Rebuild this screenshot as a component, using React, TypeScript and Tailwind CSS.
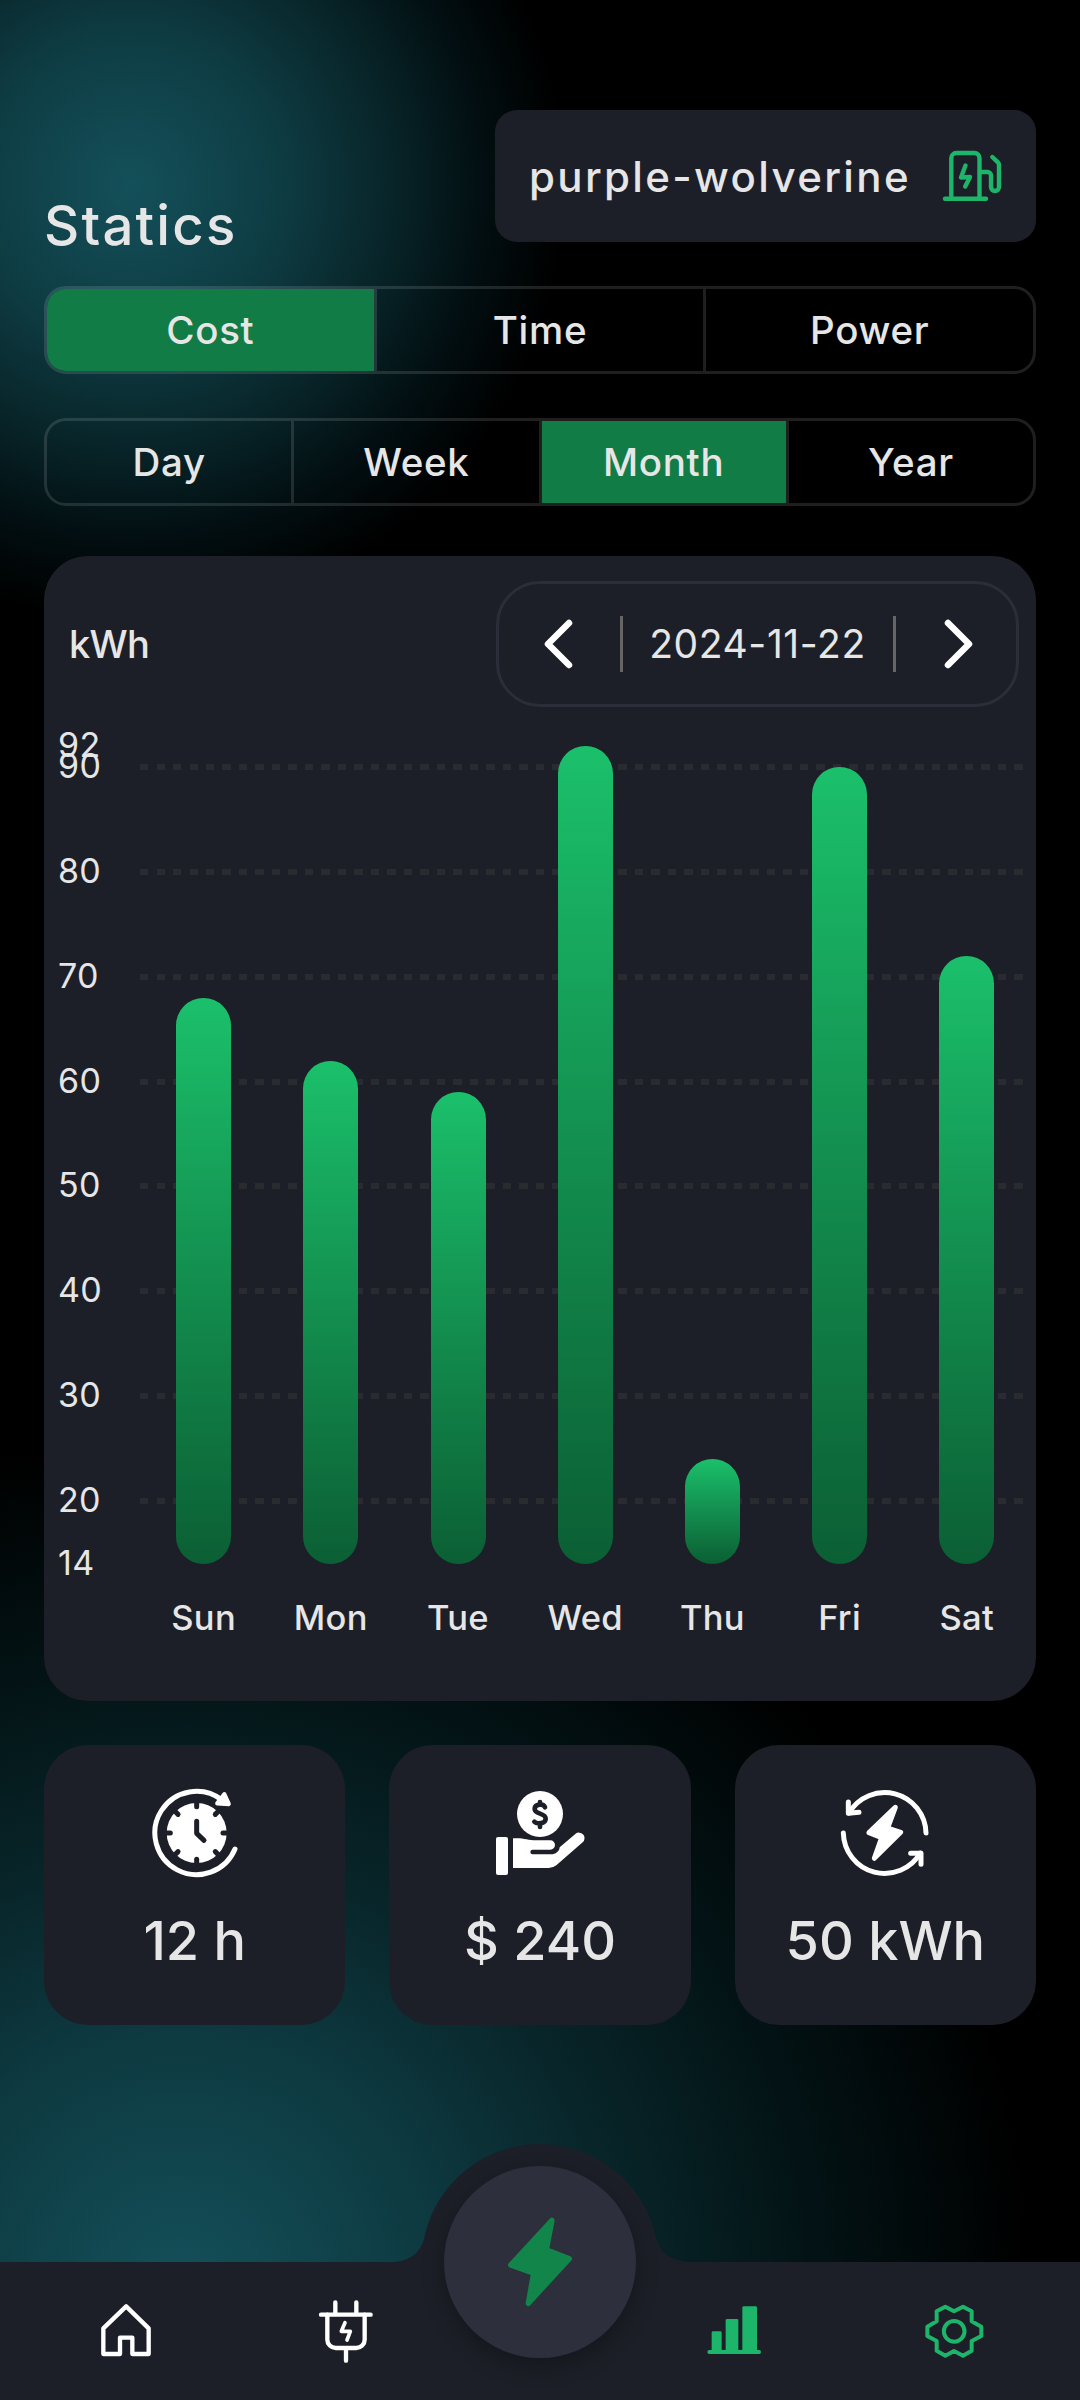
import type { ReactNode } from "react";

const GREEN = "#1db569";

const readings = [
  { day: "Sun", value: 68 },
  { day: "Mon", value: 62 },
  { day: "Tue", value: 59 },
  { day: "Wed", value: 92 },
  { day: "Thu", value: 24 },
  { day: "Fri", value: 90 },
  { day: "Sat", value: 72 },
];

const MIN = 14;
const MAX = 92;
const ticks = [92, 90, 80, 70, 60, 50, 40, 30, 20, 14];

// Distance from the top of the plot, in percent
const fromTop = (value: number) => ((MAX - value) / (MAX - MIN)) * 100;

function ChargerIcon() {
  return (
    <svg width="66" height="66" viewBox="0 0 66 66" fill="none" stroke={GREEN} strokeWidth="4.4" strokeLinecap="round" strokeLinejoin="round">
      <path d="M12.3 55V15a5 5 0 0 1 5-5h18.2a5 5 0 0 1 5 5v40" />
      <path d="M6 55.7h41" />
      <path d="M26.5 22.5 22 34.5l9-.5-4.8 9.5" />
      <path d="M41 29h7.5a3.5 3.5 0 0 1 3.5 3.5V44a4 4 0 0 0 8 0V22c0-1-.3-1.700-.8-2.300L53.300 14" />
    </svg>
  );
}

function ClockIcon() {
  return (
    <svg width="96" height="96" viewBox="0 0 288 288" fill="none" strokeLinecap="round" strokeLinejoin="round">
      <path d="M225 45A125 125 0 1 0 264 192" stroke="#fff" strokeWidth="15" />
      <path d="M232 28 245 57 211 55Z" fill="#fff" stroke="#fff" strokeWidth="13" />
      <circle cx="149" cy="144" r="90" fill="#fff" />
      <g stroke="#1d1f28" strokeWidth="15">
        {[0, 45, 90, 135, 180, 225, 270, 315].map((deg) => (
          <path key={deg} d="M149 50v15" transform={`rotate(${deg} 149 144)`} />
        ))}
        <path d="M149 109v36l22 21" />
      </g>
    </svg>
  );
}

function MoneyIcon() {
  return (
    <svg width="96" height="96" viewBox="0 0 288 288" fill="#fff">
      <circle cx="144" cy="87" r="69" />
      <path
        d="M144 51v8M144 118v8M159 67c-4-12-31-11-31 5 0 17 33 11 33 29 0 17-28 16-34 9"
        fill="none"
        stroke="#1d1f28"
        strokeWidth="14"
        strokeLinecap="round"
        strokeLinejoin="round"
      />
      <rect x="12" y="156" width="36" height="114" rx="6" />
      <path d="M63 160c29-3 45 6 69 6h43a14 14 0 0 1 0 28h-53a7 7 0 0 0 0 14h55c14 0 25-8 26-21l47-40a16 16 0 0 1 22 25l-79 69q-10 8-23 8H63Z" />
    </svg>
  );
}

function EnergyIcon() {
  return (
    <svg width="96" height="96" viewBox="0 0 288 288" fill="none" stroke="#fff" strokeWidth="15" strokeLinecap="round" strokeLinejoin="round">
      <path d="M267 144A124 124 0 0 0 36 84" />
      <path d="M34 51v34l32-3" />
      <path d="M19 144A124 124 0 0 0 250 204" />
      <path d="M221 205h31v33" />
      <path d="M175 67 152 129 191 142 112 220 134 158 96 143Z" fill="#fff" />
    </svg>
  );
}

function HomeIcon() {
  return (
    <svg width="66" height="66" viewBox="0 0 198 198" fill="none" stroke="#fff" strokeWidth="13" strokeLinejoin="round">
      <path d="M31 168V91L99.500 25 167 91v77h-49v-49H81v49Z" />
    </svg>
  );
}

function PlugIcon() {
  return (
    <svg width="66" height="66" viewBox="0 0 198 198" fill="none" stroke="#fff" strokeWidth="13" strokeLinecap="round" strokeLinejoin="round">
      <path d="M67 13v34M130 13v34M24 50h149M99 154v34" />
      <path d="M43 50v75a25 25 0 0 0 25 25h62a25 25 0 0 0 25-25V50" />
      <path d="M96 74 85 100h27l-10 26" strokeWidth="11" />
    </svg>
  );
}

function StatsIcon() {
  return (
    <svg width="66" height="66" viewBox="0 0 198 198" fill={GREEN}>
      <rect x="32" y="100" width="30" height="64" rx="4" />
      <rect x="74" y="63" width="38" height="100" rx="4" />
      <rect x="124" y="25" width="44" height="138" rx="4" />
      <rect x="19" y="156" width="161" height="12" rx="6" />
    </svg>
  );
}

function SettingsIcon() {
  return (
    <svg width="66" height="66" viewBox="0 0 198 198" fill="none" stroke={GREEN} strokeWidth="12" strokeLinejoin="round">
      <path d="M73 26 99 40 126 26 152 40V70L181 86V114L152 129V158L126 173 99 159 73 173 47 158V129L19 114V86L47 70V40Z" />
      <circle cx="99.500" cy="100" r="31" />
    </svg>
  );
}

function Segmented({ items, active }: { items: string[]; active: string }) {
  return (
    <div className="flex h-[88px] overflow-hidden rounded-[22px] border-3 border-white/12 bg-clip-padding">
      {items.map((item, i) => (
        <div
          key={item}
          className={`flex flex-1 items-center justify-center pt-0.5 text-[38.5px] font-medium tracking-[0.7px] ${
            i > 0 ? "border-l-3 border-white/12 bg-clip-padding" : ""
          } ${item === active ? "bg-[#127c46]" : ""}`}
        >
          {item}
        </div>
      ))}
    </div>
  );
}

function DatePicker() {
  return (
    <div className="flex h-[126px] w-[523px] items-center justify-between rounded-[44px] border-3 border-[#2b2d39] px-[42px]">
      <svg width="32" height="54" viewBox="0 0 32 54" fill="none" stroke="#fff" strokeWidth="6.500" strokeLinecap="round" strokeLinejoin="round">
        <path d="M28 6 7 27l21 21" />
      </svg>
      <div className="flex items-center gap-[28px]">
        <div className="h-14 w-[3px] bg-[#666666]" />
        <span className="flex w-[214px] justify-center text-[39px] tracking-[0.6px] whitespace-nowrap">
          2024-11-22
        </span>
        <div className="h-14 w-[3px] bg-[#666666]" />
      </div>
      <svg width="32" height="54" viewBox="0 0 32 54" fill="none" stroke="#fff" strokeWidth="6.500" strokeLinecap="round" strokeLinejoin="round">
        <path d="M6 6l21 21L6 48" />
      </svg>
    </div>
  );
}

function Chart() {
  return (
    <div className="mt-[39px] flex">
      <div className="relative h-[818px] w-[96px]">
        {ticks.map((tick) => (
          <span
            key={tick}
            className="absolute left-[14px] -mt-px -translate-y-1/2 text-[34px] leading-none tracking-[0.3px]"
            style={{ top: `${fromTop(tick)}%` }}
          >
            {tick}
          </span>
        ))}
      </div>
      <div className="w-[883px]">
        <div className="relative h-[818px]">
          {ticks.slice(1, -1).map((tick) => (
            <div
              key={tick}
              className="absolute inset-x-0 h-[6px] -translate-y-1/2 bg-[repeating-linear-gradient(90deg,#292b31_0_8.25px,transparent_8.25px_16.5px)]"
              style={{ top: `${fromTop(tick)}%` }}
            />
          ))}
          <div className="relative flex h-full items-end justify-between pr-[28.5px] pl-[36.3px]">
            {readings.map(({ day, value }) => (
              <div
                key={day}
                className="w-[55px] rounded-full bg-linear-to-b from-[#1bc06b] to-[#0b5f34]"
                style={{ height: `${100 - fromTop(value)}%` }}
              />
            ))}
          </div>
        </div>
        <div className="mt-[28px] flex text-[34.5px] font-medium">
          {readings.map(({ day }) => (
            <span key={day} className="w-[127.2px] shrink-0 text-center tracking-[0.3px]">
              {day}
            </span>
          ))}
        </div>
      </div>
    </div>
  );
}

function StatCard({ icon, label }: { icon: ReactNode; label: string }) {
  return (
    <div className="flex h-[280px] flex-1 flex-col items-center rounded-[44px] bg-[#1d1f28] pt-[40px]">
      {icon}
      <span className="mt-[25px] text-[54px] leading-[70px] font-medium whitespace-nowrap">{label}</span>
    </div>
  );
}

function BottomNav() {
  return (
    <nav className="relative mt-auto flex h-[138px] items-center justify-between bg-[#1d1f28] pr-[16.5px] pl-4">
      {/* Raised hump behind the charge button */}
      <svg className="absolute -top-[118px] left-[380px]" width="320" height="120" viewBox="0 0 320 120" fill="#1d1f28">
        <path d="M0 118.500H8C28 118.500 42 110 45 90A118.500 118.500 0 0 1 275 90C278 108 290 118.500 318 118.500V120H0Z" />
      </svg>
      <div className="absolute -top-24 left-[444px] flex size-48 items-center justify-center rounded-full bg-[#2d303c] shadow-[0_8px_22px_rgba(0,0,0,0.3)]">
        <svg width="96" height="96" viewBox="0 0 288 288" fill="#12854a" stroke="#12854a" strokeWidth="16" strokeLinejoin="round">
          <path d="M180 19 163 107 232 134 109 268 125 178 56 153Z" />
        </svg>
      </div>
      <div className="flex">
        <div className="flex w-[220px] justify-center"><HomeIcon /></div>
        <div className="flex w-[220px] justify-center"><PlugIcon /></div>
      </div>
      <div className="flex">
        <div className="flex w-[220px] justify-center"><StatsIcon /></div>
        <div className="flex w-[220px] justify-center"><SettingsIcon /></div>
      </div>
    </nav>
  );
}

export default function App() {
  return (
    <div className="flex h-[2400px] w-[1080px] flex-col overflow-hidden bg-black bg-[radial-gradient(circle_at_130px_185px,#14505a_0,#0e3c43_150px,#082529_260px,#020e11_355px,transparent_435px),radial-gradient(circle_at_180px_2290px,#14505a_0,#0d383f_270px,#082529_440px,#031315_630px,transparent_850px)] font-[Inter,sans-serif] text-[#e6e6e6]">
      <div className="flex flex-col px-11 pt-[110px]">
        <header className="flex h-[132px] items-end justify-between">
          <h1 className="-mb-[18px] text-[54.5px] leading-[70px] font-medium tracking-[2.2px]">Statics</h1>
          <div className="flex h-[132px] w-[541px] items-center justify-between rounded-[22px] bg-[#1d1f28] pr-[31px] pl-[34px]">
            <span className="text-[42px] font-medium tracking-[2.35px]">purple-wolverine</span>
            <ChargerIcon />
          </div>
        </header>

        <div className="mt-11 flex flex-col gap-11">
          <Segmented items={["Cost", "Time", "Power"]} active="Cost" />
          <Segmented items={["Day", "Week", "Month", "Year"]} active="Month" />
        </div>

        <section className="mt-[50px] h-[1145px] rounded-[44px] bg-[#1d1f28] pt-[25px]">
          <div className="flex items-center justify-between pr-[17px] pl-[25px]">
            <span className="text-[38px] font-medium tracking-[-0.7px]">kWh</span>
            <DatePicker />
          </div>
          <Chart />
        </section>

        <div className="mt-11 flex gap-11">
          <StatCard icon={<ClockIcon />} label="12 h" />
          <StatCard icon={<MoneyIcon />} label="$ 240" />
          <StatCard icon={<EnergyIcon />} label="50 kWh" />
        </div>
      </div>
      <BottomNav />
    </div>
  );
}
